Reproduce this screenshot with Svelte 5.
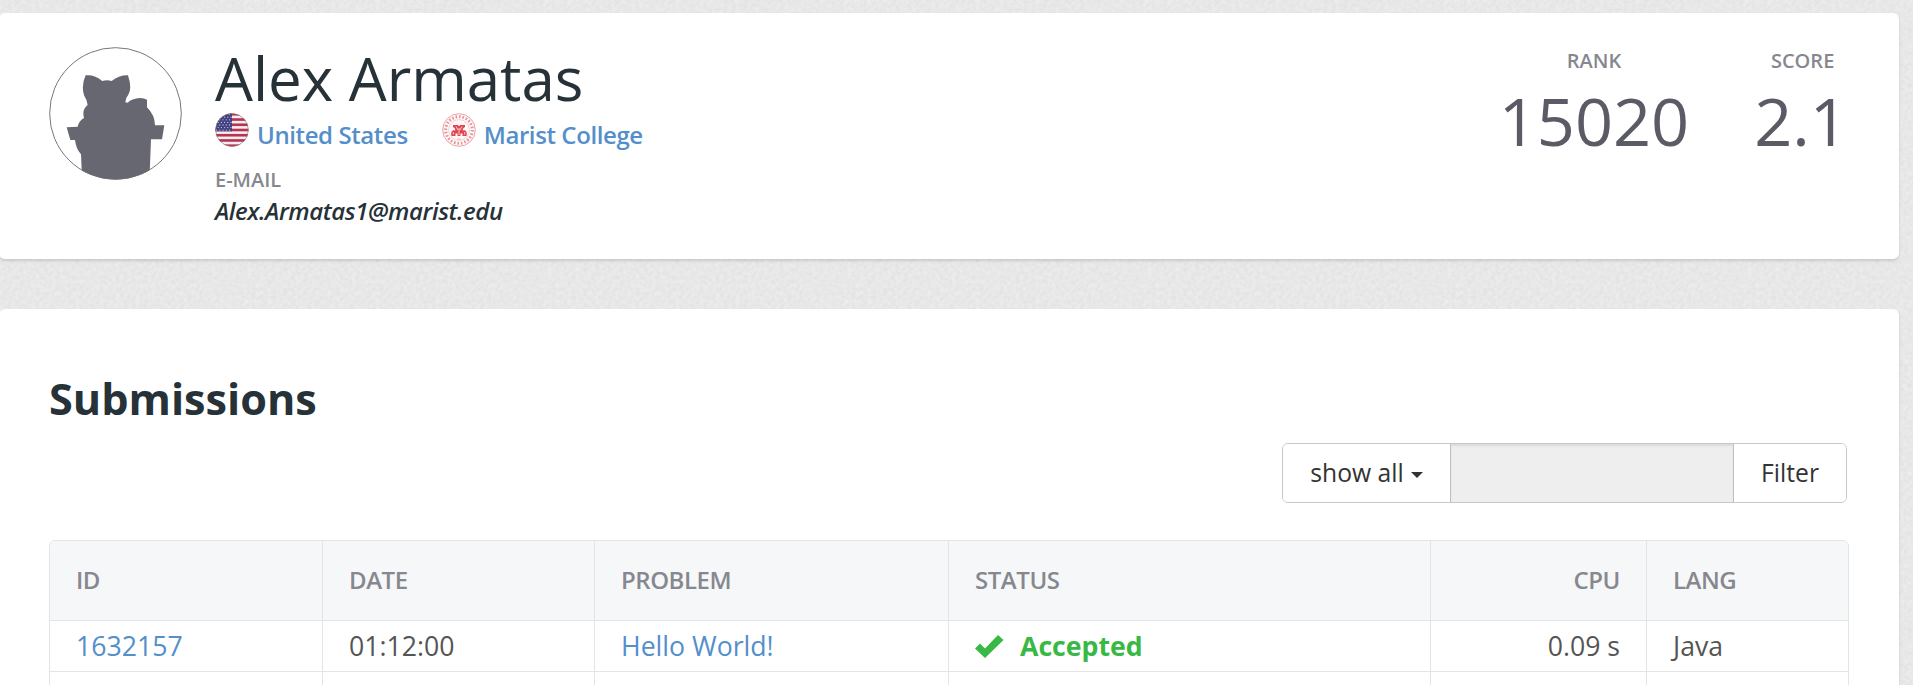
<script>
  const columns = [
    { label: 'ID', width: 272 },
    { label: 'DATE', width: 272 },
    { label: 'PROBLEM', width: 354 },
    { label: 'STATUS', width: 482 },
    { label: 'CPU', width: 216, right: true },
    { label: 'LANG', width: 202 }
  ];
  const stripes = [0, 1, 2, 3, 4, 5, 6];
  const stars = [];
  for (let r = 0; r < 7; r++) {
    for (let c = 0; c < 5; c++) stars.push([1.6 + c * 3.2 + (r % 2) * 1.6, 1.6 + r * 2.6]);
  }
</script>

<div class="page">
  <section class="card profile">
    <svg class="avatar" viewBox="27 20 399 399" aria-hidden="true">
      <defs><clipPath id="face"><circle cx="226.5" cy="219.5" r="198" /></clipPath></defs>
      <path
        clip-path="url(#face)"
        fill="#666770"
        d="M137 105 Q164 102 187 122 Q201 118 215 122 Q237 104 264 105 Q277 145 265 163 Q256 173 256 186 L263 187 Q275 175 300 173 Q313 174 321 178 L321 201 Q345 225 345 255 L373 255 L366 297 L333 297 L329 400 L329 430 L127 430 L123 342 Q108 326 105 299 L91 299 L80 261 L113 259 Q117 241 132 233 Q125 208 143 194 Q140 177 132 165 Q123 135 137 105 Z"
      />
      <circle cx="226.5" cy="219.5" r="197.5" fill="none" stroke="#6c6c72" stroke-width="2.8" />
    </svg>

    <div class="info">
      <h1>Alex Armatas</h1>
      <div class="links">
        <a class="link country" href="#country">
          <svg viewBox="0 0 34 34" aria-hidden="true">
            <defs><clipPath id="round"><circle cx="17" cy="17" r="16.5" /></clipPath></defs>
            <g clip-path="url(#round)">
              <rect width="34" height="34" fill="#f4eef2" />
              {#each stripes as s}
                <rect y={s * 5.23} width="34" height="2.62" fill="#b83350" />
              {/each}
              <rect width="17" height="18.3" fill="#414182" />
              {#each stars as [x, y]}
                <circle cx={x} cy={y} r="0.65" fill="#c9c9e2" />
              {/each}
            </g>
            <circle cx="17" cy="17" r="16.4" fill="none" stroke="#777" stroke-opacity=".7" stroke-width=".8" />
          </svg>
          <span>United States</span>
        </a>
        <a class="link college" href="#college">
          <svg viewBox="0 0 34 34" aria-hidden="true" fill="none" stroke="#e25560">
            <circle cx="17" cy="17" r="16.3" stroke-width=".8" stroke="#e58a92" fill="#fffafa" />
            <circle cx="17" cy="17" r="13.3" stroke-width="3" stroke-dasharray="1.6 1.9" stroke="#e98f96" pathLength="84" />
            <circle cx="17" cy="17" r="10.4" stroke-width=".6" stroke="#efb0b5" />
            <path fill="#e04550" stroke="none" d="M11 12H16L17 13.500L18 12H23V14L21.500 15L20.500 17.500C24 16.500 25.500 19 24.500 23H20.500V20.500H18.500V23H15.500V20.500H13.500V23H9.500C8.500 19 10 16.500 13.500 17.500L12.500 15L11 14Z" />
            <path stroke="#fff0f0" stroke-width=".8" d="M14 13.500L16 17M20 13.500L18 17M11.300 19V21.500M22.700 19V21.500M17 15V22" />
            <path stroke-width="1" d="M15.500 26H18.500" stroke="#efa5aa" />
          </svg>
          <span>Marist College</span>
        </a>
      </div>
      <div class="label">E-MAIL</div>
      <div class="email">Alex.Armatas1@marist.edu</div>
    </div>

    <div class="stats">
      <div class="stat rank"><div class="label">RANK</div><div class="value">15020</div></div>
      <div class="stat score"><div class="label">SCORE</div><div class="value">2.1</div></div>
    </div>
  </section>

  <section class="card submissions">
    <h2>Submissions</h2>
    <div class="filter">
      <button class="show">show all<i class="caret"></i></button>
      <div class="field"></div>
      <button class="go">Filter</button>
    </div>

    <div class="table">
      <table>
        <colgroup>
          {#each columns as c}<col style="width:{c.width}px" />{/each}
        </colgroup>
        <thead>
          <tr>
            {#each columns as c}<th class:right={c.right}>{c.label}</th>{/each}
          </tr>
        </thead>
        <tbody>
          <tr>
            <td><a href="#submission">1632157</a></td>
            <td>01:12:00</td>
            <td><a href="#problem">Hello World!</a></td>
            <td>
              <span class="status">
                <svg viewBox="0 0 29 23" width="29" height="23" aria-hidden="true">
                  <path fill="#38b844" d="M0 13.500L5 8.500L10 13.500L23 0L28.500 5L10 23Z" />
                </svg>
                Accepted
              </span>
            </td>
            <td class="right">0.09 s</td>
            <td>Java</td>
          </tr>
          <tr>
            <td></td><td></td><td></td>
            <td class="next">
              <svg viewBox="0 0 22 22" width="22" height="22" aria-hidden="true">
                <path fill="#e2e2e4" d="M5 0L11 6L17 0L22 5L16 11L22 17L17 22L11 16L5 22L0 17L6 11L0 5Z" />
              </svg>
            </td>
            <td></td><td></td>
          </tr>
        </tbody>
      </table>
    </div>
  </section>
</div>

<style>
  :global(body) {
    margin: 0;
    overflow: hidden;
  }
  .page {
    box-sizing: border-box;
    height: 685px;
    padding-top: 13px;
    overflow: hidden;
    background-color: #e7e7e7;
    background-image: url("data:image/svg+xml,%3Csvg xmlns='http://www.w3.org/2000/svg' width='300' height='300'%3E%3Cfilter id='n' x='0' y='0' width='1' height='1' color-interpolation-filters='sRGB'%3E%3CfeTurbulence type='fractalNoise' baseFrequency='.25' numOctaves='2' stitchTiles='stitch'/%3E%3CfeColorMatrix values='.065 0 0 0 .876 .065 0 0 0 .876 .065 0 0 0 .876 0 0 0 0 1'/%3E%3C/filter%3E%3Crect width='300' height='300' filter='url(%23n)'/%3E%3C/svg%3E");
    font-family: 'Open Sans', 'Noto Sans', sans-serif;
    color: #263238;
  }
  .card {
    box-sizing: border-box;
    width: 1900px;
    margin-left: -1px;
    padding: 0 50px;
    background: #fff;
    border-radius: 6px;
    box-shadow: 0 2px 3px rgba(0, 0, 0, 0.13);
  }
  .profile {
    display: flex;
    height: 246px;
    margin-bottom: 50px;
  }
  .avatar {
    flex: none;
    width: 133px;
    height: 133px;
    margin-top: 34px;
  }
  .info {
    flex: 1;
    padding: 32px 0 0 33px;
  }
  h1 {
    margin: 0;
    font-size: 60px;
    font-weight: 400;
    line-height: 66px;
  }
  .links {
    display: flex;
    height: 39px;
    margin-top: 2px;
    gap: 34px;
  }
  .link {
    display: flex;
    gap: 8px;
    font-size: 24px;
    font-weight: 600;
    letter-spacing: -0.4px;
    line-height: 34px;
  }
  .link svg {
    width: 34px;
    height: 34px;
  }
  .link span {
    margin-top: 5px;
  }
  a {
    color: #548fca;
    text-decoration: none;
  }
  .label {
    font-size: 20px;
    font-weight: 600;
    line-height: 24px;
    color: #87888f;
  }
  .info .label {
    margin-top: 16px;
  }
  .email {
    margin-top: 3px;
    font-size: 24px;
    font-style: italic;
    font-weight: 600;
    letter-spacing: -0.4px;
    line-height: 32px;
  }
  .stats {
    display: flex;
    gap: 65px;
    padding: 36px 1px 0 0;
    text-align: center;
  }
  .value {
    margin-top: 13px;
    font-size: 66.67px;
    line-height: 70px;
    color: #5a5b65;
  }
  .score .label {
    padding-left: 3px;
  }
  .submissions {
    height: 420px;
    padding-top: 65px;
  }
  h2 {
    margin: 0;
    font-size: 43.2px;
    font-weight: 700;
    line-height: 50px;
  }
  .filter {
    display: flex;
    box-sizing: border-box;
    width: 565px;
    height: 60px;
    margin: 19px 2px 37px auto;
    border: 1px solid #c8c8c8;
    border-radius: 6px;
    overflow: hidden;
  }
  button {
    display: flex;
    align-items: center;
    justify-content: center;
    padding: 0;
    border: 0;
    background: #fff;
    color: #333;
    font: 400 24.7px/34px 'Open Sans', sans-serif;
  }
  .show {
    width: 167px;
    gap: 7px;
  }
  .caret {
    margin-top: 4px;
    border: 6px solid transparent;
    border-top-color: #333;
    border-bottom: 0;
  }
  .field {
    flex: 1;
    border: solid #c0c0c0;
    border-width: 0 1px;
    background: #eee;
    box-shadow: inset 0 2px 2px rgba(0, 0, 0, 0.075);
  }
  .go {
    width: 112px;
  }
  .table {
    height: 200px;
    border: 1px solid #e3e4e6;
    border-radius: 6px 6px 0 0;
    overflow: hidden;
  }
  table {
    width: 1798px;
    table-layout: fixed;
    border-spacing: 0;
  }
  th,
  td {
    box-sizing: border-box;
    padding: 0 26px;
    border-bottom: 1px solid #e3e4e6;
    border-left: 1px solid #e3e4e6;
    text-align: left;
  }
  th:first-child,
  td:first-child {
    border-left: 0;
  }
  th {
    height: 80px;
    padding-bottom: 2px;
    background: #f6f7f9;
    color: #87888f;
    font-size: 24px;
    font-weight: 600;
    letter-spacing: -0.45px;
  }
  td {
    height: 51px;
    color: #555;
    font-size: 26.67px;
    line-height: 36px;
  }
  th.right,
  td.right {
    text-align: right;
  }
  .status {
    display: flex;
    align-items: center;
    gap: 16px;
    color: #38b844;
    font-weight: 700;
  }
  .next {
    padding-left: 29px;
    line-height: 0;
  }
</style>
